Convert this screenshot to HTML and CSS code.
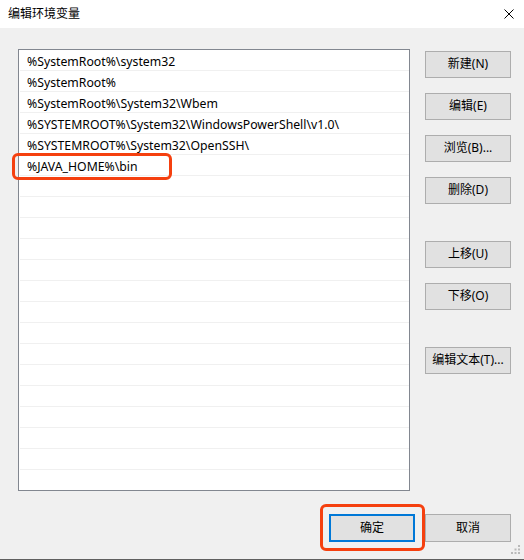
FILE: index.html
```html
<!DOCTYPE html>
<html lang="zh-CN">
<head>
<meta charset="utf-8">
<title>编辑环境变量</title>
<link rel="stylesheet" href="styles.css">
</head>
<body>
<div class="window">
  <div class="titlebar">
    <span class="title">编辑环境变量</span>
    <svg class="close" width="10" height="10" viewBox="0 0 10 10"><path d="M0.5 0.5 L9.5 9.5 M9.5 0.5 L0.5 9.5" stroke="#000" stroke-width="1" fill="none"/></svg>
  </div>
  <div class="content">
    <div class="main">
      <div class="list">
        <div class="row">%SystemRoot%\system32</div>
        <div class="row">%SystemRoot%</div>
        <div class="row">%SystemRoot%\System32\Wbem</div>
        <div class="row">%SYSTEMROOT%\System32\WindowsPowerShell\v1.0\</div>
        <div class="row">%SYSTEMROOT%\System32\OpenSSH\</div>
        <div class="row">%JAVA_HOME%\bin</div>
        <div class="row"></div>
        <div class="row"></div>
        <div class="row"></div>
        <div class="row"></div>
        <div class="row"></div>
        <div class="row"></div>
        <div class="row"></div>
        <div class="row"></div>
        <div class="row"></div>
        <div class="row"></div>
        <div class="row"></div>
        <div class="row"></div>
        <div class="row"></div>
        <div class="row"></div>
        <div class="row"></div>
      </div>
      <div class="side">
        <button class="btn">新建(N)</button>
        <button class="btn">编辑(E)</button>
        <button class="btn">浏览(B)...</button>
        <button class="btn">删除(D)</button>
        <button class="btn sep">上移(U)</button>
        <button class="btn">下移(O)</button>
        <button class="btn sep">编辑文本(T)...</button>
      </div>
    </div>
    <div class="footer">
      <button class="btn btn-default">确定</button>
      <button class="btn">取消</button>
    </div>
  </div>
  <div class="mark mark-row"></div>
  <div class="mark mark-ok"></div>
  <svg class="grip" width="10" height="10" viewBox="0 0 10 10">
    <rect x="7" y="0" width="2" height="2" fill="#b9b9b9"/>
    <rect x="3.5" y="3.5" width="2" height="2" fill="#b9b9b9"/>
    <rect x="7" y="3.5" width="2" height="2" fill="#b9b9b9"/>
    <rect x="0" y="7" width="2" height="2" fill="#b9b9b9"/>
    <rect x="3.5" y="7" width="2" height="2" fill="#b9b9b9"/>
    <rect x="7" y="7" width="2" height="2" fill="#b9b9b9"/>
  </svg>
</div>
</body>
</html>
```

FILE: styles.css
```css
* { box-sizing: border-box; }
html, body { margin: 0; padding: 0; }
body {
  width: 524px;
  height: 560px;
  overflow: hidden;
  font-family: "Noto Sans", "Noto Sans CJK SC", sans-serif;
  font-size: 12px;
  color: #000;
}
.window {
  position: relative;
  width: 524px;
  height: 560px;
  background: #f0f0f0;
  border-bottom: 1px solid #5f5f5f;
  display: flex;
  flex-direction: column;
}
.titlebar {
  height: 28px;
  background: #fff;
  display: flex;
  align-items: center;
  justify-content: space-between;
  padding: 0 10px 2px 8px;
}
.title {
  font-family: "Noto Sans CJK SC", sans-serif;
  font-size: 12px;
  line-height: 14px;
}
.close { display: block; margin-top: 1px; }
.content {
  padding: 21px 13px 0 18px;
}
.main {
  display: flex;
  gap: 15px;
  align-items: flex-start;
}
.list {
  width: 392px;
  height: 442px;
  border: 1px solid #828790;
  background: #fff;
  overflow: hidden;
}
.row {
  height: 21px;
  margin: 0 0 0 1px;
  border-bottom: 1px solid #f0f0f0;
  padding: 2px 0 0 7px;
  font-size: 12.25px;
  line-height: 19px;
  white-space: nowrap;
}
.side {
  width: 86px;
  display: flex;
  flex-direction: column;
  gap: 15px;
  padding-top: 2px;
}
.btn {
  font-family: "Noto Sans", "Noto Sans CJK SC", sans-serif;
  font-size: 12px;
  color: #000;
  width: 86px;
  height: 27px;
  padding: 0 0 1px;
  background: #e1e1e1;
  border: 1px solid #adadad;
  border-radius: 0;
  line-height: 24px;
  text-align: center;
}
.sep { margin-top: 22px; }
.footer {
  display: flex;
  justify-content: flex-end;
  gap: 10px;
  margin-top: 23px;
}
.footer .btn { height: 28px; width: 86px; }
.btn-default { border: 2px solid #0078d7; width: 86px; }
.mark {
  position: absolute;
  border: 3px solid #f5400f;
  border-radius: 6px;
}
.mark-row { left: 12px; top: 153px; width: 160px; height: 27px; }
.mark-ok { left: 320px; top: 504px; width: 105px; height: 47px; }
.grip { position: absolute; right: 3px; bottom: 4px; }
```
